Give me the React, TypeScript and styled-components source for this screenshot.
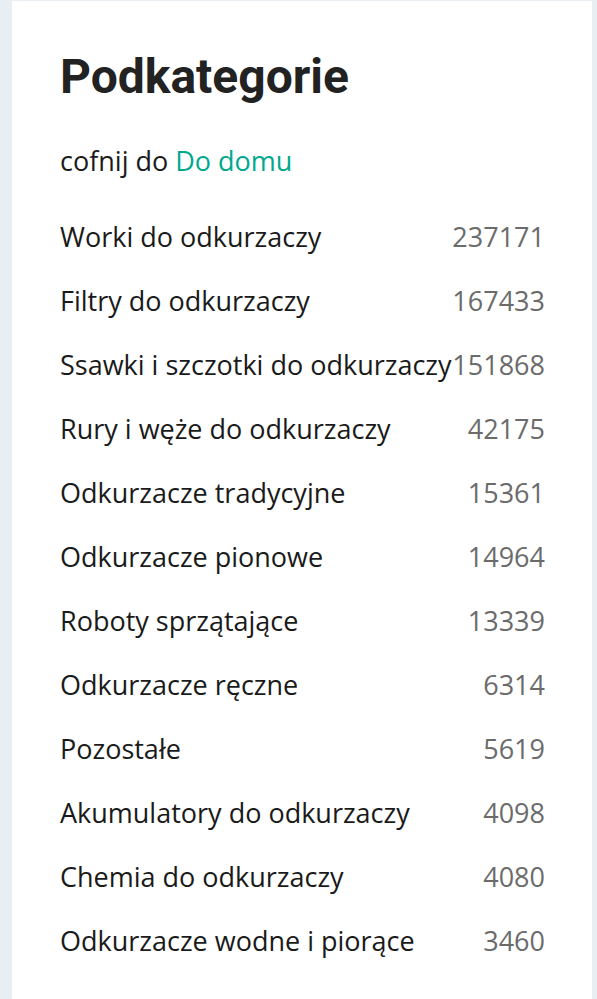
import React from 'react';
import styled, { createGlobalStyle } from 'styled-components';

const GlobalStyle = createGlobalStyle`
  html, body {
    margin: 0;
    padding: 0;
    background-color: #e9eef2;
  }
`;

const Page = styled.div`
  display: flex;
  padding: 1px 5px 0 12px;
  min-height: 999px;
  box-sizing: border-box;
`;

const Panel = styled.section`
  flex: 1;
  padding: 44px 47px 40px 48px;
  background-color: #ffffff;
  font-family: 'Open Sans', sans-serif;
  color: #1a1a1a;
`;

const Title = styled.h2`
  margin: 0 0 20px;
  font-family: Roboto, sans-serif;
  font-size: 48px;
  font-weight: 700;
  line-height: 64px;
  color: #222222;
`;

const Back = styled.p`
  margin: 0 0 11px;
  font-size: 27px;
  line-height: 64px;
`;

const BackLink = styled.a`
  color: #00a88e;
  text-decoration: none;
`;

const List = styled.ul`
  margin: 0;
  padding: 0;
  list-style: none;
`;

const Row = styled.li`
  display: flex;
  justify-content: space-between;
  align-items: center;
  height: 64px;
  font-size: 27px;
`;

const Name = styled.span`
  white-space: nowrap;
`;

const Count = styled.span`
  color: #6b6b6b;
`;

interface Category {
  name: string;
  count: number;
}

const categories: Category[] = [
  { name: 'Worki do odkurzaczy', count: 237171 },
  { name: 'Filtry do odkurzaczy', count: 167433 },
  { name: 'Ssawki i szczotki do odkurzaczy', count: 151868 },
  { name: 'Rury i węże do odkurzaczy', count: 42175 },
  { name: 'Odkurzacze tradycyjne', count: 15361 },
  { name: 'Odkurzacze pionowe', count: 14964 },
  { name: 'Roboty sprzątające', count: 13339 },
  { name: 'Odkurzacze ręczne', count: 6314 },
  { name: 'Pozostałe', count: 5619 },
  { name: 'Akumulatory do odkurzaczy', count: 4098 },
  { name: 'Chemia do odkurzaczy', count: 4080 },
  { name: 'Odkurzacze wodne i piorące', count: 3460 },
];

const App = () => {
  return (
    <>
      <GlobalStyle />
      <Page>
        <Panel>
          <Title>Podkategorie</Title>
          <Back>
            cofnij do <BackLink href="#">Do domu</BackLink>
          </Back>
          <List>
            {categories.map((c) => (
              <Row key={c.name}>
                <Name>{c.name}</Name>
                <Count>{c.count}</Count>
              </Row>
            ))}
          </List>
        </Panel>
      </Page>
    </>
  );
};

export default App;
